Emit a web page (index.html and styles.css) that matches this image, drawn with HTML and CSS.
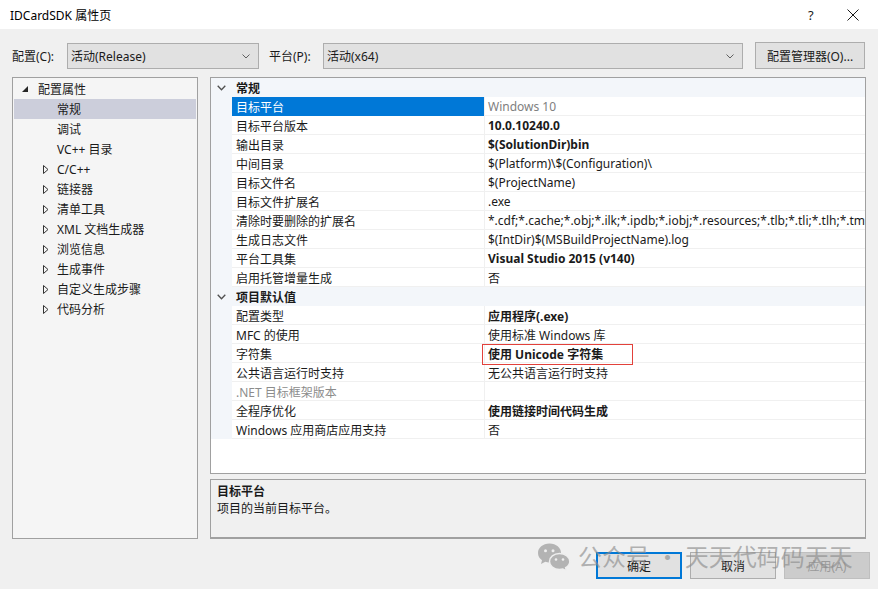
FILE: index.html
```html
<!DOCTYPE html>
<html lang="zh-CN">
<head>
<meta charset="utf-8">
<title>IDCardSDK 属性页</title>
<link rel="stylesheet" href="styles.css">
</head>
<body>
<div class="window">
  <div class="titlebar">
    <span class="title">IDCardSDK 属性页</span>
    <span class="tb-help">?</span>
    <span class="tb-close"><svg width="12" height="12" viewBox="0 0 12 12"><path d="M0.5 0.5 L11.5 11.5 M11.5 0.5 L0.5 11.5" stroke="#1a1a1a" stroke-width="1" fill="none"/></svg></span>
  </div>

  <div class="toolbar">
    <span class="lbl lbl-config">配置(C):</span>
    <div class="combo combo-config"><span>活动(Release)</span><svg class="chev" width="8" height="5" viewBox="0 0 8 5"><path d="M0.5 0.5 L4 4 L7.5 0.5" stroke="#606060" fill="none"/></svg></div>
    <span class="lbl lbl-platform">平台(P):</span>
    <div class="combo combo-platform"><span>活动(x64)</span><svg class="chev" width="8" height="5" viewBox="0 0 8 5"><path d="M0.5 0.5 L4 4 L7.5 0.5" stroke="#606060" fill="none"/></svg></div>
    <button class="btn btn-manager">配置管理器(O)...</button>
  </div>

  <div class="main">
    <div class="tree">
      <div class="tree-row lvl0"><span class="twisty"><svg width="6" height="6" viewBox="0 0 6 6"><polygon points="6,0 6,6 0,6" fill="#262626"/></svg></span><span>配置属性</span></div>
      <div class="tree-row lvl1 selected"><span class="twisty"></span><span>常规</span></div>
      <div class="tree-row lvl1"><span class="twisty"></span><span>调试</span></div>
      <div class="tree-row lvl1"><span class="twisty"></span><span>VC++ 目录</span></div>
      <div class="tree-row lvl1"><span class="twisty"><svg width="6" height="9" viewBox="0 0 6 9"><polygon points="0.5,0.5 5,4.5 0.5,8.5" fill="none" stroke="#333" stroke-width="1"/></svg></span><span>C/C++</span></div>
      <div class="tree-row lvl1"><span class="twisty"><svg width="6" height="9" viewBox="0 0 6 9"><polygon points="0.5,0.5 5,4.5 0.5,8.5" fill="none" stroke="#333" stroke-width="1"/></svg></span><span>链接器</span></div>
      <div class="tree-row lvl1"><span class="twisty"><svg width="6" height="9" viewBox="0 0 6 9"><polygon points="0.5,0.5 5,4.5 0.5,8.5" fill="none" stroke="#333" stroke-width="1"/></svg></span><span>清单工具</span></div>
      <div class="tree-row lvl1"><span class="twisty"><svg width="6" height="9" viewBox="0 0 6 9"><polygon points="0.5,0.5 5,4.5 0.5,8.5" fill="none" stroke="#333" stroke-width="1"/></svg></span><span>XML 文档生成器</span></div>
      <div class="tree-row lvl1"><span class="twisty"><svg width="6" height="9" viewBox="0 0 6 9"><polygon points="0.5,0.5 5,4.5 0.5,8.5" fill="none" stroke="#333" stroke-width="1"/></svg></span><span>浏览信息</span></div>
      <div class="tree-row lvl1"><span class="twisty"><svg width="6" height="9" viewBox="0 0 6 9"><polygon points="0.5,0.5 5,4.5 0.5,8.5" fill="none" stroke="#333" stroke-width="1"/></svg></span><span>生成事件</span></div>
      <div class="tree-row lvl1"><span class="twisty"><svg width="6" height="9" viewBox="0 0 6 9"><polygon points="0.5,0.5 5,4.5 0.5,8.5" fill="none" stroke="#333" stroke-width="1"/></svg></span><span>自定义生成步骤</span></div>
      <div class="tree-row lvl1"><span class="twisty"><svg width="6" height="9" viewBox="0 0 6 9"><polygon points="0.5,0.5 5,4.5 0.5,8.5" fill="none" stroke="#333" stroke-width="1"/></svg></span><span>代码分析</span></div>
    </div>

    <div class="right">
      <div class="grid">
        <div class="cat"><span class="gutter"><svg width="9" height="6" viewBox="0 0 9 6"><path d="M0.7 0.7 L4.5 4.8 L8.3 0.7" stroke="#505050" stroke-width="1.3" fill="none"/></svg></span><span class="cat-name">常规</span></div>
        <div class="row"><span class="gutter"></span><span class="name sel">目标平台</span><span class="val gray">Windows 10</span></div>
        <div class="row"><span class="gutter"></span><span class="name">目标平台版本</span><span class="val bold">10.0.10240.0</span></div>
        <div class="row"><span class="gutter"></span><span class="name">输出目录</span><span class="val bold">$(SolutionDir)bin</span></div>
        <div class="row"><span class="gutter"></span><span class="name">中间目录</span><span class="val">$(Platform)\$(Configuration)\</span></div>
        <div class="row"><span class="gutter"></span><span class="name">目标文件名</span><span class="val">$(ProjectName)</span></div>
        <div class="row"><span class="gutter"></span><span class="name">目标文件扩展名</span><span class="val">.exe</span></div>
        <div class="row"><span class="gutter"></span><span class="name">清除时要删除的扩展名</span><span class="val">*.cdf;*.cache;*.obj;*.ilk;*.ipdb;*.iobj;*.resources;*.tlb;*.tli;*.tlh;*.tmp;*.rsp;*.pgc;*.pgd;*.meta;*.tlog</span></div>
        <div class="row"><span class="gutter"></span><span class="name">生成日志文件</span><span class="val">$(IntDir)$(MSBuildProjectName).log</span></div>
        <div class="row"><span class="gutter"></span><span class="name">平台工具集</span><span class="val bold">Visual Studio 2015 (v140)</span></div>
        <div class="row"><span class="gutter"></span><span class="name">启用托管增量生成</span><span class="val">否</span></div>
        <div class="cat"><span class="gutter"><svg width="9" height="6" viewBox="0 0 9 6"><path d="M0.7 0.7 L4.5 4.8 L8.3 0.7" stroke="#505050" stroke-width="1.3" fill="none"/></svg></span><span class="cat-name">项目默认值</span></div>
        <div class="row"><span class="gutter"></span><span class="name">配置类型</span><span class="val bold">应用程序(.exe)</span></div>
        <div class="row"><span class="gutter"></span><span class="name">MFC 的使用</span><span class="val">使用标准 Windows 库</span></div>
        <div class="row"><span class="gutter"></span><span class="name">字符集</span><span class="val bold mark">使用 Unicode 字符集<span class="redbox"></span></span></div>
        <div class="row"><span class="gutter"></span><span class="name">公共语言运行时支持</span><span class="val">无公共语言运行时支持</span></div>
        <div class="row"><span class="gutter"></span><span class="name gray2">.NET 目标框架版本</span><span class="val"></span></div>
        <div class="row"><span class="gutter"></span><span class="name">全程序优化</span><span class="val bold">使用链接时间代码生成</span></div>
        <div class="row"><span class="gutter"></span><span class="name">Windows 应用商店应用支持</span><span class="val">否</span></div>
      </div>
      <div class="desc">
        <div class="desc-title">目标平台</div>
        <div class="desc-text">项目的当前目标平台。</div>
      </div>
    </div>
  </div>

  <div class="footer">
    <button class="btn fbtn default">确定</button>
    <button class="btn fbtn">取消</button>
    <button class="btn fbtn disabled">应用(A)</button>
  </div>

  <div class="watermark">
    <svg width="34" height="29" viewBox="0 0 34 29">
      <path d="M12.5 1.5 C5.8 1.5 1 5.8 1 11 C1 14 2.6 16.6 5 18.3 L4 22 L8.3 19.8 C9.6 20.2 11 20.4 12.5 20.4 C19.2 20.4 24 16.2 24 11 C24 5.8 19.2 1.5 12.5 1.5 Z" fill="#a9a9a9"/>
      <path d="M22.5 11.5 C16.7 11.5 12.5 15.1 12.5 19.5 C12.5 23.9 16.7 27.5 22.5 27.5 C23.7 27.5 24.8 27.3 25.9 27 L29.5 28.8 L28.6 25.7 C31.2 24.2 32.8 22 32.8 19.5 C32.8 15.1 28.3 11.5 22.5 11.5 Z" fill="#a9a9a9" stroke="#efefef" stroke-width="1.4"/>
      <circle cx="8.5" cy="8.8" r="1.5" fill="#efefef"/>
      <circle cx="16" cy="8.8" r="1.5" fill="#efefef"/>
      <circle cx="19" cy="17.5" r="1.3" fill="#efefef"/>
      <circle cx="26" cy="17.5" r="1.3" fill="#efefef"/>
    </svg>
    <span class="wm-text">公众号 · 天天代码码天天</span>
  </div>
</div>
</body>
</html>
```

FILE: styles.css
```css
* { box-sizing: border-box; }
html, body { margin: 0; padding: 0; }
body {
  width: 878px;
  height: 589px;
  overflow: hidden;
  background: #f0f0f0;
  font-family: "Noto Sans", "Noto Sans CJK SC", sans-serif;
  font-size: 12px;
  color: #1a1a1a;
}
.window { position: relative; width: 878px; height: 589px; }

.titlebar {
  height: 29px;
  background: #ffffff;
  display: flex;
  align-items: center;
  padding-left: 10px;
}
.title { flex: 1; font-size: 12px; color: #000; }
.tb-help { width: 12px; margin-right: 27px; font-size: 13px; color: #1a1a1a; }
.tb-close { width: 12px; margin-right: 19px; display: flex; }

.toolbar {
  display: flex;
  align-items: center;
  height: 27px;
  margin-top: 13px;
  padding-left: 12px;
}
.lbl { white-space: nowrap; }
.lbl-config { width: 55px; }
.lbl-platform { width: 54px; margin-left: 10px; }
.combo {
  height: 26px;
  background: #e1e1e1;
  border: 1px solid #adadad;
  display: flex;
  align-items: center;
  justify-content: space-between;
  padding: 0 8px 0 3px;
}
.combo-config { width: 192px; }
.combo-platform { width: 420px; }
.chev { margin-top: 1px; }

.btn {
  font-family: inherit;
  font-size: 12px;
  color: #1a1a1a;
  background: #e1e1e1;
  border: 1px solid #adadad;
  padding: 0;
  margin: 0;
}
.btn-manager { width: 110px; height: 27px; margin-left: 12px; }

.main {
  display: flex;
  margin-top: 8px;
  padding-left: 12px;
  height: 462px;
}
.tree {
  width: 186px;
  height: 462px;
  background: #f5f5f5;
  border: 1px solid #a0a0a0;
  padding: 1px;
}
.tree-row {
  height: 20px;
  display: flex;
  align-items: center;
  white-space: nowrap;
}
.tree-row.lvl0 { padding-left: 8px; }
.tree-row.lvl0 .twisty { width: 16px; }
.tree-row.lvl1 { padding-left: 29px; }
.tree-row.lvl1 .twisty { width: 14px; }
.twisty { display: flex; align-items: center; height: 20px; }
.tree-row.selected { background: #cccedb; }

.right {
  width: 656px;
  margin-left: 12px;
  display: flex;
  flex-direction: column;
}
.grid {
  height: 397px;
  background: #ffffff;
  border: 1px solid #a0a0a0;
  overflow: hidden;
}
.cat, .row {
  height: 19px;
  display: flex;
  align-items: stretch;
  white-space: nowrap;
}
.cat { background: #f3f6fa; }
.gutter {
  width: 21px;
  flex: none;
  background: #f3f6fa;
  display: flex;
  align-items: center;
  padding-left: 6px;
}
.cat-name { font-weight: bold; padding-left: 4px; padding-top: 1px; display: flex; align-items: center; }
.name {
  width: 252px;
  flex: none;
  padding-left: 4px;
  padding-top: 1px;
  display: flex;
  align-items: center;
  border-bottom: 1px solid #f0f0f0;
}
.name.sel { background: #0078d7; color: #ffffff; border-bottom-color: #0078d7; }
.name.gray2 { color: #8c8c8c; }
.val {
  flex: 1;
  min-width: 0;
  overflow: hidden;
  padding-left: 3px;
  padding-top: 1px;
  display: flex;
  align-items: center;
  border-left: 1px solid #f0f0f0;
  border-bottom: 1px solid #f0f0f0;
}
.val.bold { font-weight: bold; }
.val.gray { color: #808080; }
.val.mark { position: relative; overflow: visible; }
.redbox {
  position: absolute;
  left: -3px;
  top: 0;
  width: 151px;
  height: 21px;
  border: 1px solid #e2413b;
}

.desc {
  margin-top: 5px;
  height: 60px;
  background: #f0f0f0;
  border: 1px solid #a0a0a0;
  border-bottom-width: 2px;
  padding: 3px 0 0 6px;
  line-height: 17px;
}
.desc-title { font-weight: bold; }

.footer {
  display: flex;
  justify-content: flex-end;
  gap: 8px;
  margin-top: 13px;
  padding-right: 8px;
}
.fbtn { width: 86px; height: 27px; }
.fbtn.default { border: 2px solid #0078d7; }
.fbtn.disabled { background: #cccccc; border-color: #bfbfbf; color: #9a9a9a; }

.watermark {
  position: absolute;
  left: 537px;
  top: 541px;
  display: flex;
  align-items: center;
  gap: 7px;
  opacity: 0.85;
  pointer-events: none;
}
.wm-text {
  font-family: "Noto Sans CJK SC", sans-serif;
  font-size: 24px;
  line-height: 30px;
  color: rgba(140, 140, 140, 0.75);
  white-space: nowrap;
}
```
